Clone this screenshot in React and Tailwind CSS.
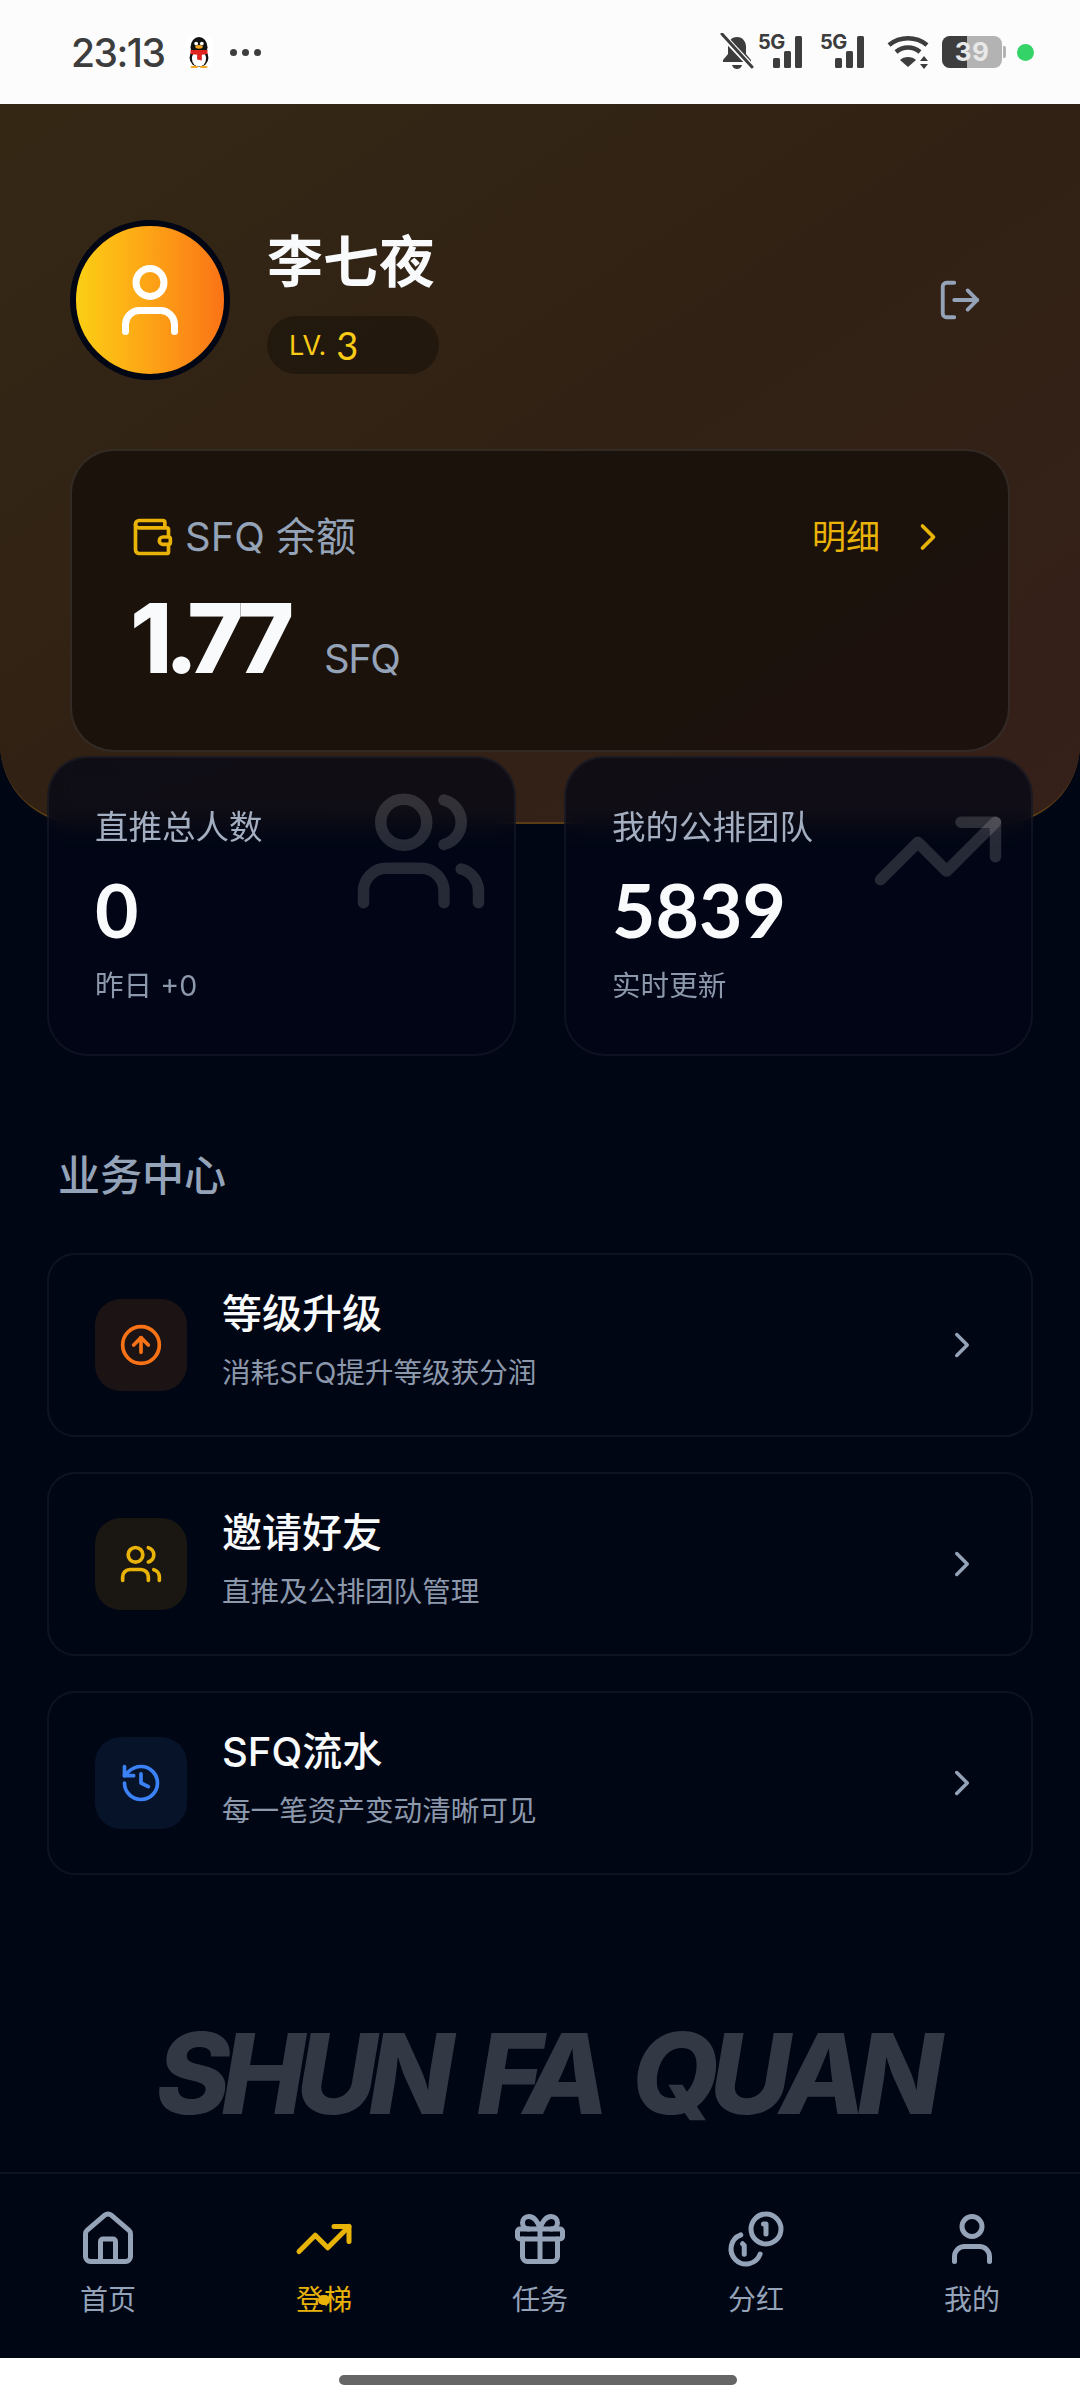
import React from "react";
import { Wallet, ChevronRight, LogOut, User, Users, TrendingUp, CircleArrowUp, History, House, Gift } from "lucide-react";

const cjk = "font-['Inter','Noto_Sans_CJK_SC',sans-serif]";

function Coins2({ size, strokeWidth }) {
  return (
    <svg width={size} height={size} viewBox="0 0 24 24" fill="none" stroke="currentColor" strokeWidth={strokeWidth} strokeLinecap="round" strokeLinejoin="round">
      <circle cx="16" cy="8" r="6" />
      <path d="M5.91 10.37A6 6 0 1 0 13.66 18" />
      <path d="M15 6h1v4" />
      <path d="m6.6 13.88.7.71v3.5" />
    </svg>
  );
}

function Penguin() {
  return (
    <svg width="30" height="32" viewBox="0 0 30 34">
      <rect x="0" y="0" width="30" height="34" rx="8" fill="#ffffff" />
      <ellipse cx="15" cy="12" rx="9" ry="11" fill="#111" />
      <ellipse cx="15" cy="23" rx="10" ry="10" fill="#111" />
      <ellipse cx="15" cy="24" rx="7.5" ry="8.5" fill="#fff" />
      <circle cx="12" cy="8" r="2" fill="#fff" />
      <circle cx="18" cy="8" r="2" fill="#fff" />
      <ellipse cx="15" cy="11.5" rx="4" ry="2" fill="#f5a623" />
      <path d="M6 15h18v4l-6 1v6l-5-1v-5l-7-1z" fill="#e0241f" />
      <ellipse cx="10" cy="33" rx="4" ry="1.3" fill="#f5a623" />
      <ellipse cx="20" cy="33" rx="4" ry="1.3" fill="#f5a623" />
    </svg>
  );
}

function StatusIcons() {
  const c = "#3d3d3d";
  const Signal = () => (
    <span className="relative block h-[34px] w-[52px]">
      <span className="absolute left-0 top-[-4px] font-['Inter',sans-serif] text-[20px] font-bold leading-[22px] tracking-[-0.5px] text-[#3d3d3d]">5G</span>
      <svg className="absolute left-0 top-0" width="52" height="34" viewBox="0 0 52 34" fill={c}>
        <rect x="15" y="23" width="7" height="10" rx="1.5" />
        <rect x="26" y="16" width="7" height="17" rx="1.5" />
        <rect x="37" y="1" width="7" height="32" rx="1.5" />
      </svg>
    </span>
  );
  return (
    <div className="flex items-center">
      <svg width="36" height="38" viewBox="0 0 36 38" fill={c} className="mr-[3px]">
        <path d="M18 4c6 0 9 5 9 10v7l5 6v2H4v-2l5-6v-7c0-5 3-10 9-10z" />
        <path d="M13 32h10c-1 3-3 4-5 4s-4-1-5-4z" />
        <path d="M3 2 33 34" stroke="#fcfcfc" strokeWidth="6" />
        <path d="M3 1 33 34" stroke={c} strokeWidth="3" strokeLinecap="round" />
      </svg>
      <Signal />
      <span className="w-[10px]" />
      <Signal />
      <svg width="46" height="36" viewBox="0 0 46 36" fill="none" stroke={c} strokeWidth="4.5" className="ml-[14px]">
        <path d="M3 11c11-9 27-9 38 0" />
        <path d="M10 18c7-6 17-6 24 0" />
        <path d="M14 26l8 7 8-7c-4-4-12-4-16 0z" fill={c} stroke="none" />
        <path d="M38 22l-4 5h8zM38 35l-4-5h8z" fill={c} stroke="none" />
      </svg>
      <span className="relative ml-[10px] block h-[32px] w-[60px] overflow-hidden rounded-[8px] bg-[#b3b3b3]">
        <span className="absolute bottom-0 left-0 top-0 w-[25px] bg-[#3d3d3d]" />
        <span className="absolute inset-0 text-center font-['Inter',sans-serif] text-[26px] font-bold leading-[32px] tracking-[0.5px] text-[#e8e8e8]">39</span>
      </span>
      <span className="ml-[1px] block h-[12px] w-[3px] rounded-r-[2px] bg-[#b3b3b3]" />
      <span className="ml-[11px] block h-[17px] w-[17px] rounded-full bg-[#34d368]" />
    </div>
  );
}

function Stat({ label, value, sub, Icon }) {
  return (
    <div className="relative h-[300px] overflow-hidden rounded-[40px] border-2 border-white/5 bg-[#010615]/70 pl-[46px] pt-[47px] backdrop-blur-md">
      <div className="text-[33.5px] leading-[44px] text-[#a3aec0]">{label}</div>
      <div className="mt-[17px] font-['Lato','Inter',sans-serif] text-[75px] font-bold leading-[86px] text-[#f8fafc]">{value}</div>
      <div className="mt-[15px] text-[28.6px] leading-[38px] text-[#8c98ab]">{sub}</div>
      <Icon className="absolute right-[24px] top-[24px] text-white/15" size={138} strokeWidth={2} />
    </div>
  );
}

function Row({ title, sub, Icon, color, bg }) {
  return (
    <div className="flex h-[184px] items-center rounded-[28px] border-2 border-white/5 pl-[46px] pr-[48px]">
      <div className={`flex h-[92px] w-[92px] items-center justify-center rounded-[26px] ${bg}`}>
        <Icon size={44} color={color} strokeWidth={2} />
      </div>
      <div className="ml-[35px] flex-1 pb-[9px]">
        <div className="text-[40px] font-medium leading-[50px] text-[#f8fafc]">{title}</div>
        <div className="mt-[15px] text-[28.6px] leading-[38px] text-[#8c98ab]">{sub}</div>
      </div>
      <ChevronRight size={42} color="#94a3b8" strokeWidth={2} />
    </div>
  );
}

function Tab({ Icon, label, active }) {
  const col = active ? "text-[#eab308]" : "text-[#94a3b8]";
  return (
    <div className={`relative flex flex-1 flex-col items-center pt-[35px] ${col}`}>
      <Icon size={60} strokeWidth={2} />
      <div className="mt-[11px] text-[28px] leading-[40px]">{label}</div>
      {active && <span className="absolute left-1/2 top-[121px] h-[10px] w-[12px] -translate-x-1/2 rounded-full bg-[#eab308]" />}
    </div>
  );
}

export default function App() {
  return (
    <div className={`flex h-[2400px] w-[1080px] flex-col overflow-hidden bg-[#010615] ${cjk}`}>
      <div className="flex h-[104px] items-center justify-between bg-[#fcfcfc] pl-[71px] pr-[46px]">
        <div className="flex items-center">
          <span className="text-[39px] font-medium leading-none tracking-[-1.5px] text-[#3d3d3d]">23:13</span>
          <span className="ml-[20px]"><Penguin /></span>
          <span className="ml-[16px] flex gap-[5px]">
            <span className="block h-[7px] w-[7px] rounded-full bg-[#3d3d3d]" />
            <span className="block h-[7px] w-[7px] rounded-full bg-[#3d3d3d]" />
            <span className="block h-[7px] w-[7px] rounded-full bg-[#3d3d3d]" />
          </span>
        </div>
        <StatusIcons />
      </div>

      <main className="flex-1">
        <div className="h-[720px] rounded-b-[80px] border-b-2 border-[#5a3d14] bg-gradient-to-br from-[#342815] via-[#312114] to-[#36201a] px-[70px] pt-[116px]">
          <div className="flex items-center">
            <div className="flex h-[160px] w-[160px] items-center justify-center rounded-full border-[6px] border-[#010615] bg-gradient-to-r from-[#fbcf14] to-[#f97316]">
              <User size={84} color="#fff" strokeWidth={2} />
            </div>
            <div className="ml-[37px] flex-1">
              <div className="text-[56px] font-bold leading-[72px] text-[#f8fafc]">李七夜</div>
              <div className="mt-[18px] flex h-[58px] w-[172px] items-center rounded-full bg-black/30 pl-[22px] text-[#facc15]">
                <span className="text-[27px] leading-none">LV.</span>
                <span className="ml-[10px] font-['Lato',sans-serif] text-[38px] leading-none">3</span>
              </div>
            </div>
            <LogOut size={46} color="#94a3b8" strokeWidth={2} className="mr-[27px]" />
          </div>

          <div className="mt-[69px] h-[303px] rounded-[44px] border-2 border-white/10 bg-black/45 pl-[58px] pr-[58px] pt-[59px]">
            <div className="flex items-center">
              <Wallet size={44} color="#eab308" strokeWidth={2} />
              <span className="ml-[11px] text-[40px] leading-[54px] text-[#94a3b8]">SFQ 余额</span>
              <span className="ml-auto text-[34px] leading-[54px] text-[#eab308]">明细</span>
              <ChevronRight size={44} color="#eab308" strokeWidth={2} className="ml-[26px]" />
            </div>
            <div className="mt-[24px] flex items-baseline">
              <span className="font-['Inter',sans-serif] text-[96px] font-extrabold leading-[100px] tracking-[-8px] text-[#f8fafc]">1.77</span>
              <span className="ml-[38px] text-[40px] leading-none tracking-[-1.5px] text-[#94a3b8]">SFQ</span>
            </div>
          </div>
        </div>

        <div className="relative -mt-[68px] grid grid-cols-2 gap-[48px] px-[47px]">
          <Stat label="直推总人数" value="0" sub="昨日 +0" Icon={Users} />
          <Stat label="我的公排团队" value="5839" sub="实时更新" Icon={TrendingUp} />
        </div>

        <div className="mt-[92px] px-[58px] text-[42px] font-medium leading-[56px] text-[#94a3b8]">业务中心</div>

        <div className="mt-[49px] flex flex-col gap-[35px] px-[47px]">
          <Row title="等级升级" sub="消耗SFQ提升等级获分润" Icon={CircleArrowUp} color="#f97316" bg="bg-[#1c1414]" />
          <Row title="邀请好友" sub="直推及公排团队管理" Icon={Users} color="#eab308" bg="bg-[#1a1712]" />
          <Row title="SFQ流水" sub="每一笔资产变动清晰可见" Icon={History} color="#3b82f6" bg="bg-[#061329]" />
        </div>

        <div className="mt-[132px] pl-[10px] text-center font-['Inter',sans-serif] text-[112px] font-extrabold italic leading-[132px] tracking-[-9px] text-[#333845] [word-spacing:16px]">SHUN FA QUAN</div>
      </main>

      <nav className="flex h-[186px] border-t-2 border-white/5 bg-[#010615]">
        <Tab Icon={House} label="首页" />
        <Tab Icon={TrendingUp} label="登梯" active />
        <Tab Icon={Gift} label="任务" />
        <Tab Icon={Coins2} label="分红" />
        <Tab Icon={User} label="我的" />
      </nav>
      <div className="flex h-[42px] justify-center bg-white pt-[17px]">
        <div className="ml-[-5px] h-[10px] w-[398px] rounded-full bg-[#666666]" />
      </div>
    </div>
  );
}
